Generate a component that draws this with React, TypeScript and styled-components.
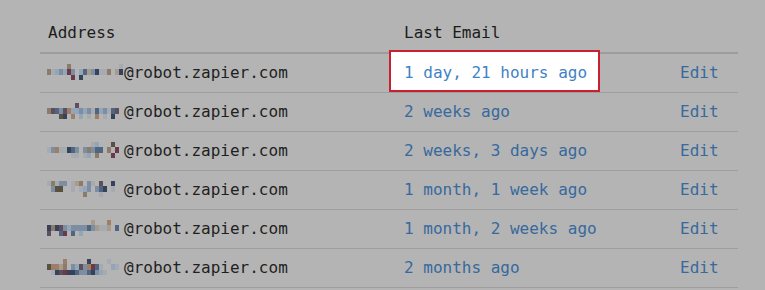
import React from 'react';
import styled, { createGlobalStyle } from 'styled-components';

const GlobalStyle = createGlobalStyle`
  html, body {
    margin: 0;
    padding: 0;
    background: #b4b4b4;
  }
  body {
    font-family: 'DejaVu Sans Mono', 'Liberation Mono', monospace;
    font-size: 16px;
    color: #222;
  }
`;

// blurred-out account names, one string of swatch keys per block row
const swatches: Record<string, string> = {
  a: '#8c7b68',
  b: '#5f4f5e',
  c: '#4f6580',
  d: '#34435a',
  e: '#93a5b8',
  f: '#a99b8b',
  g: '#6b3a48',
  h: '#7d8ea2',
  i: '#a6abb1',
  j: '#5a5040',
  k: '#9c7f66',
};

type Row = { name: string[]; when: string };

const rows: Row[] = [
  {
    name: ['.....a............i', 'aiehegh.ecfhdiia.fd', '......g.d..........'],
    when: '1 day, 21 hours ago',
  },
  {
    name: ['.......b...........', 'abchbkeehehicehicb.', '...jd.k.e.i.k.i.d..'],
    when: '2 weeks ago',
  },
  {
    name: ['...........ie...j..', 'ihkiidch.hahcc.a.g.', '......ii.ie.a...g..'],
    when: '2 weeks, 3 days ago',
  },
  {
    name: ['iaihh.ifa.hi.b..d..', '.hjj..i.ieh.hcd.i..', '.........a...i.....'],
    when: '1 month, 1 week ago',
  },
  {
    name: ['...........f...k...', 'dadbhehhhhchfiif.c.', 'b..cg.c.e..........'],
    when: '1 month, 2 weeks ago',
  },
  {
    name: ['....k.....d....i...', 'jkkfa.hebhkgci..ei.', '.idbgddchhcdhei....'],
    when: '2 months ago',
  },
];

const Page = styled.div`
  padding: 14px 27px 0 40px;
`;

const Table = styled.table`
  width: 698px;
  border-collapse: collapse;
  table-layout: fixed;
`;

const Head = styled.th<{ $width: number }>`
  box-sizing: border-box;
  width: ${(p) => p.$width}px;
  padding: 8px;
  text-align: left;
  font-weight: normal;
  line-height: 22px;
  color: #1c1c1c;
  border-bottom: 2px solid #9c9c9c;
`;

const Cell = styled.td`
  box-sizing: border-box;
  padding: 8px;
  line-height: 22px;
  white-space: nowrap;
  border-bottom: 1px solid #9e9e9e;
  color: #1f1f1f;
`;

const Link = styled.a`
  color: #36699d;
  text-decoration: none;
`;

const Callout = styled.span`
  position: relative;
  display: inline-block;
  padding: 10px 11px 6px 13px;
  margin: -12px -13px -8px -15px;
  background: #fff;
  border: 2px solid #c8202f;

  ${Link} {
    color: #3f82c4;
  }
`;

const Mosaic = styled.svg`
  display: inline-block;
  margin-left: -1px;
  vertical-align: -2px;
`;

const Redacted = ({ name }: { name: string[] }) => {
  const heights = [5, 6, 5];
  let y = 0;
  return (
    <Mosaic width={77} height={16} viewBox="0 0 77 16">
      {name.map((line, r) => {
        const top = y;
        y += heights[r];
        return line.split('').map((k, c) =>
          swatches[k] ? (
            <rect key={`${r}-${c}`} x={c * 4} y={top} width={4} height={heights[r]} fill={swatches[k]} />
          ) : null,
        );
      })}
    </Mosaic>
  );
};

export default function App() {
  return (
    <>
      <GlobalStyle />
      <Page>
        <Table>
          <thead>
            <tr>
              <Head $width={356}>Address</Head>
              <Head $width={276}>Last Email</Head>
              <Head $width={66} />
            </tr>
          </thead>
          <tbody>
            {rows.map((row, i) => (
              <tr key={i}>
                <Cell>
                  <Redacted name={row.name} />
                  @robot.zapier.com
                </Cell>
                <Cell>
                  {i === 0 ? (
                    <Callout>
                      <Link href="#">{row.when}</Link>
                    </Callout>
                  ) : (
                    <Link href="#">{row.when}</Link>
                  )}
                </Cell>
                <Cell>
                  <Link href="#">Edit</Link>
                </Cell>
              </tr>
            ))}
          </tbody>
        </Table>
      </Page>
    </>
  );
}
